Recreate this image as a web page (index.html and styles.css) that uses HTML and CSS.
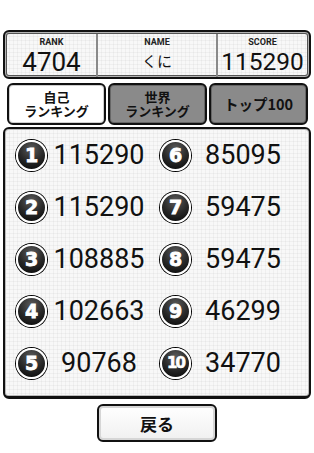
FILE: index.html
```html
<!DOCTYPE html>
<html lang="ja">
<head>
    <meta charset="UTF-8">
    <meta name="viewport" content="width=device-width, initial-scale=1.0">
    <title>ランキング</title>
    <link rel="stylesheet" href="styles.css">
</head>
<body>
    <div class="screen">
        <div class="status">
            <div class="cell rank">
                <span class="label">RANK</span>
                <span class="value">4704</span>
            </div>
            <div class="cell name">
                <span class="label">NAME</span>
                <span class="value jp">くに</span>
            </div>
            <div class="cell score">
                <span class="label">SCORE</span>
                <span class="value">115290</span>
            </div>
        </div>

        <div class="tabs">
            <button class="tab active">自己<br>ランキング</button>
            <button class="tab">世界<br>ランキング</button>
            <button class="tab wide">トップ100</button>
        </div>

        <div class="board">
            <div class="entry"><span class="badge">1</span><span class="points">115290</span></div>
            <div class="entry"><span class="badge">6</span><span class="points">85095</span></div>
            <div class="entry"><span class="badge">2</span><span class="points">115290</span></div>
            <div class="entry"><span class="badge">7</span><span class="points">59475</span></div>
            <div class="entry"><span class="badge">3</span><span class="points">108885</span></div>
            <div class="entry"><span class="badge">8</span><span class="points">59475</span></div>
            <div class="entry"><span class="badge">4</span><span class="points">102663</span></div>
            <div class="entry"><span class="badge">9</span><span class="points">46299</span></div>
            <div class="entry"><span class="badge">5</span><span class="points">90768</span></div>
            <div class="entry"><span class="badge ten">10</span><span class="points">34770</span></div>
        </div>

        <div class="footer">
            <button class="back">戻る</button>
        </div>
    </div>
</body>
</html>
```

FILE: styles.css
```css
:root {
    --ink: #111111;
    --panel: #f8f8f8;
    --grid: rgba(0, 0, 0, 0.035);
    --tab-off: #8a8a8a;
}

* {
    margin: 0;
    padding: 0;
    box-sizing: border-box;
}

body {
    background: #ffffff;
    font-family: Roboto, "Noto Sans CJK JP", sans-serif;
    color: var(--ink);
}

.screen {
    width: 314px;
    height: 453px;
    padding-top: 30px;
}

.status,
.board {
    background-color: var(--panel);
    background-image:
        linear-gradient(var(--grid) 1px, transparent 1px),
        linear-gradient(90deg, var(--grid) 1px, transparent 1px);
    background-size: 4px 4px;
}

/* top info strip */
.status {
    margin: 0 3px;
    height: 49px;
    border: 2px solid var(--ink);
    border-radius: 6px;
    box-shadow: inset 0 0 0 1px #b4b4b4, inset 0 0 0 2px #555;
    display: grid;
    grid-template-columns: 89px 120px 1fr;
    padding: 2px;
}

.cell {
    display: flex;
    flex-direction: column;
    align-items: center;
}

.cell + .cell {
    border-left: 2px solid #8a8a8a;
}

.label {
    font-size: 9px;
    font-weight: bold;
    line-height: 10px;
    margin-top: 3px;
    color: #222;
}

.value {
    font-size: 26px;
    line-height: 30px;
}

.score .value {
    font-size: 24.5px;
}

.value.jp {
    font-size: 15px;
    line-height: 28px;
    font-family: "Noto Sans CJK JP", sans-serif;
}

/* tab row */
.tabs {
    display: flex;
    gap: 2px;
    padding: 0 6px 0 7px;
    margin-top: 4px;
    height: 42px;
}

.tab {
    flex: 1;
    border: 2px solid var(--ink);
    border-radius: 6px;
    background: var(--tab-off);
    box-shadow: inset 0 0 0 1px #666;
    font-family: "Noto Sans CJK JP", sans-serif;
    font-weight: bold;
    font-size: 13px;
    line-height: 14px;
    color: var(--ink);
}

.tab.wide {
    font-size: 14.5px;
}

.tab.active {
    background: #ffffff;
    box-shadow: inset 0 0 0 1px #cfcfcf;
}

/* ranking board */
.board {
    margin: 2px 3px 0;
    height: 272px;
    border: 2px solid var(--ink);
    border-bottom-width: 3px;
    border-radius: 6px;
    box-shadow: inset 0 0 0 1px #bbb;
    display: grid;
    grid-template-columns: 144px 144px;
    grid-auto-rows: 52px;
    padding-left: 11px;
}

.entry {
    display: flex;
    align-items: center;
}

.badge {
    width: 31px;
    height: 31px;
    border-radius: 50%;
    border: 2px solid #ffffff;
    box-shadow: 0 0 0 1px #000;
    background: radial-gradient(circle at 50% 25%, #5a5a5a 0%, #2a2a2a 50%, #050505 100%);
    color: #ffffff;
    font-family: "DejaVu Sans", sans-serif;
    font-weight: bold;
    font-size: 19px;
    -webkit-text-stroke: 0.8px #ffffff;
    display: flex;
    align-items: center;
    justify-content: center;
    flex-shrink: 0;
}

.badge.ten {
    font-size: 15px;
    letter-spacing: -2px;
    -webkit-text-stroke: 0.6px #ffffff;
}

.points {
    width: 98px;
    margin-left: 3px;
    text-align: center;
    font-size: 27px;
}

/* back button */
.footer {
    display: flex;
    justify-content: center;
    padding-top: 5px;
}

.back {
    width: 120px;
    height: 38px;
    border: 2px solid var(--ink);
    border-radius: 6px;
    background: linear-gradient(#ffffff, #f0f0f0);
    box-shadow: inset 0 0 0 2px #d6d6d6;
    font-family: "Noto Sans CJK JP", sans-serif;
    font-weight: bold;
    font-size: 17px;
    color: var(--ink);
}
```
